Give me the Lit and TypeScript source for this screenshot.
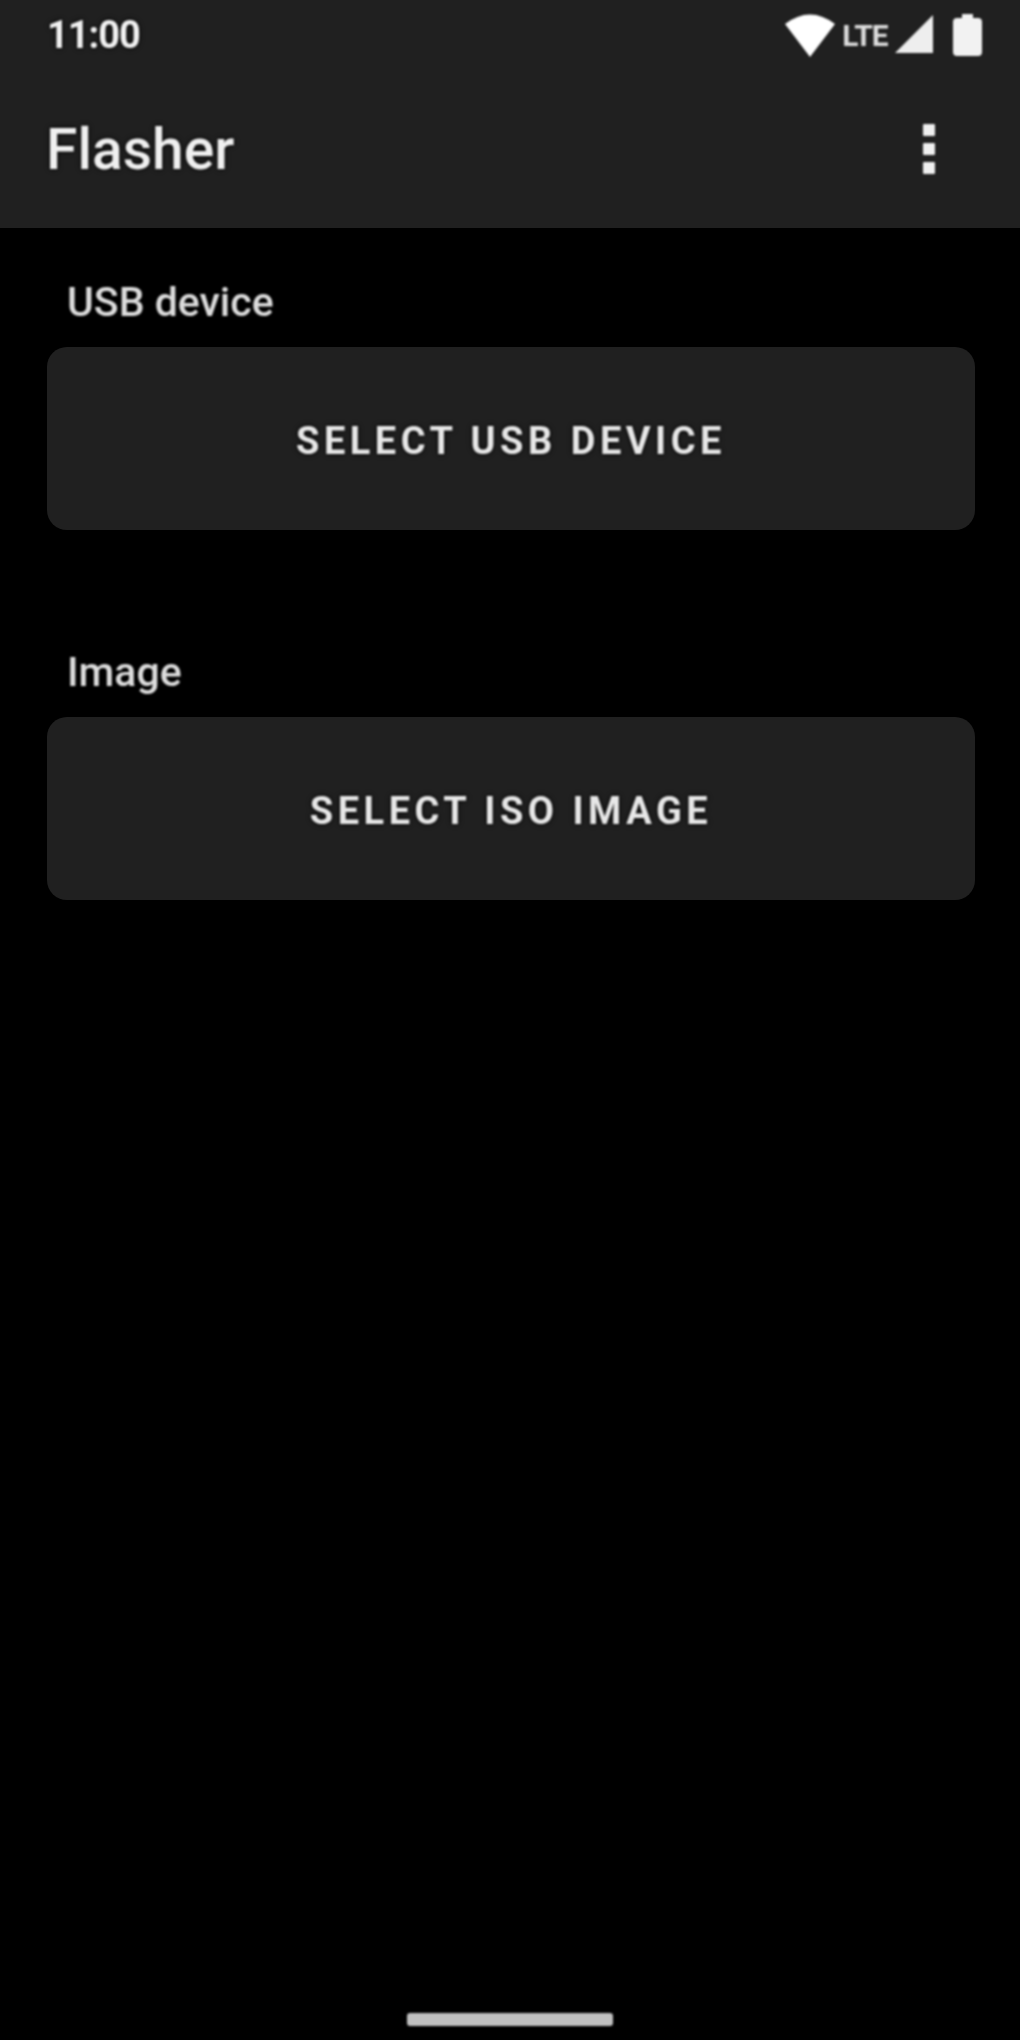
import { LitElement, html, css } from "lit";
import { customElement } from "lit/decorators.js";

@customElement("app-root")
export class AppRoot extends LitElement {
  static styles = css`
    :host {
      display: block;
      width: 1020px;
      height: 2040px;
      background: #000;
      font-family: Roboto, "Liberation Sans", sans-serif;
      color: #e4e4e4;
      overflow: hidden;
      position: relative;
    }
    .top {
      background: #202020;
      height: 228px;
      display: flex;
      flex-direction: column;
    }
    .status {
      height: 70px;
      display: flex;
      align-items: center;
      justify-content: space-between;
      padding: 0 38px 0 47px;
    }
    .time {
      font-size: 38px;
      font-weight: 700;
      color: #f2f2f2;
      letter-spacing: -1px;
      filter: blur(1.1px);
      text-shadow: 0 0 5px #000;
    }
    .icons {
      display: flex;
      align-items: center;
      gap: 4px;
      filter: blur(0.8px);
    }
    .lte {
      font-size: 30px;
      font-weight: 700;
      color: #ddd;
      width: 52px;
      text-align: center;
      letter-spacing: -1px;
    }
    .sig {
      margin-top: -2px;
    }
    .bat {
      margin-left: 14px;
    }
    .bar {
      flex: 1;
      display: flex;
      align-items: center;
      justify-content: space-between;
      padding: 0 85px 0 46px;
    }
    .title {
      font-size: 57px;
      font-weight: 500;
      color: #f0f0f0;
      filter: blur(1.2px);
      text-shadow: 0 0 5px #000;
    }
    .dots {
      display: flex;
      flex-direction: column;
      gap: 7px;
      filter: blur(0.9px);
    }
    .dots i {
      display: block;
      width: 12px;
      height: 12px;
      background: #f0f0f0;
      border-radius: 1px;
    }
    main {
      padding: 0 45px 0 47px;
    }
    .group {
      display: flex;
      flex-direction: column;
    }
    .group + .group {
      margin-top: 119px;
    }
    .first {
      padding-top: 51px;
    }
    .label {
      font-size: 41px;
      font-weight: 500;
      height: 68px;
      line-height: 46px;
      margin-left: 20px;
      color: #ddd;
      filter: blur(1.2px);
    }
    .btn {
      height: 183px;
      background: #202020;
      border-radius: 20px;
      display: flex;
      align-items: center;
      justify-content: center;
      padding-top: 4px;
      box-sizing: border-box;
      font-size: 38px;
      font-weight: 700;
      letter-spacing: 4.5px;
      color: #e8e8e8;
    }
    .btn span {
      filter: blur(1.1px);
      text-shadow: 0 0 5px #000;
    }
    .home {
      position: absolute;
      left: 407px;
      top: 2013px;
      width: 206px;
      height: 13px;
      background: #c0c0c0;
      border-radius: 3px;
      filter: blur(1px);
    }
  `;

  render() {
    return html`
      <div class="top">
        <div class="status">
          <span class="time">11:00</span>
          <div class="icons">
            <svg width="50" height="44" viewBox="0 0 50 44"><path d="M0 11 Q25 -8 50 11 L25 44 Z" fill="#fff" /></svg>
            <span class="lte">LTE</span>
            <svg class="sig" width="40" height="38" viewBox="0 0 40 38"><path d="M38 0 V38 H0 Z" fill="#eee" /></svg>
            <svg class="bat" width="29" height="42" viewBox="0 0 29 42"><path d="M9 0 H20 V4 H25 Q29 4 29 8 V38 Q29 42 25 42 H4 Q0 42 0 38 V8 Q0 4 4 4 H9 Z" fill="#f2f2f2" /></svg>
          </div>
        </div>
        <div class="bar">
          <span class="title">Flasher</span>
          <div class="dots"><i></i><i></i><i></i></div>
        </div>
      </div>
      <main>
        <div class="group first">
          <div class="label">USB device</div>
          <div class="btn"><span>SELECT USB DEVICE</span></div>
        </div>
        <div class="group">
          <div class="label">Image</div>
          <div class="btn"><span>SELECT ISO IMAGE</span></div>
        </div>
      </main>
      <div class="home"></div>
    `;
  }
}
